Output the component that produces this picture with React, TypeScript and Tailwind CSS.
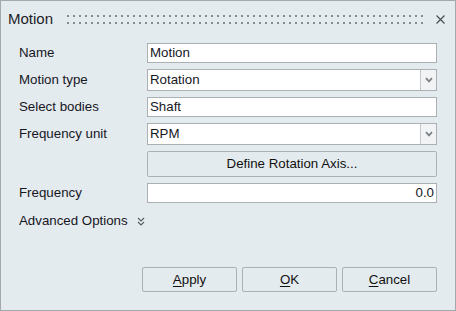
import React from "react";

const Chevron = () => (
  <svg width="8" height="6" viewBox="0 0 8 6" className="text-[#7d8287]">
    <path d="M1 1.2 L4 4.4 L7 1.2" fill="none" stroke="currentColor" strokeWidth="1.8" />
  </svg>
);

const Select = ({ value }: { value: string }) => (
  <div className="flex h-[22px] border border-[#aab0b4] bg-white">
    <div className="flex flex-1 items-center pl-[2px]">{value}</div>
    <div className="flex w-[16px] items-center justify-center border-l border-[#c4c9cc] bg-[#f1f3f4]">
      <Chevron />
    </div>
  </div>
);

const Input = ({ value, right }: { value: string; right?: boolean }) => (
  <div
    className={`flex h-[20px] items-center border border-[#aab0b4] bg-white px-[2px] ${
      right ? "justify-end" : ""
    }`}
  >
    {value}
  </div>
);

const Row = ({ label, children }: { label: string; children: React.ReactNode }) => (
  <div className="grid grid-cols-[128px_1fr] items-center">
    <div>{label}</div>
    {children}
  </div>
);

const DialogButton = ({ mn, rest }: { mn: string; rest: string }) => (
  <button className="flex h-[25px] w-[95px] items-center justify-center rounded-[2px] border border-[#aab0b4] bg-[#e4ebee] text-[#111]">
    <span className="underline underline-offset-2">{mn}</span>
    {rest}
  </button>
);

export default function App() {
  return (
    <div
      className="flex h-[311px] w-[456px] flex-col border border-[#a3a8ac] bg-[#e4ebee] text-[13.3px] text-[#16161f]"
      style={{ fontFamily: '"Liberation Sans", Arial, sans-serif' }}
    >
      <div className="flex h-[36px] items-center pl-[7px] pr-[10px]">
        <span className="text-[15px] text-[#1c1c28]">Motion</span>
        <svg className="ml-[14px] h-[9px] flex-1" preserveAspectRatio="none">
          <defs>
            <pattern id="grip" width="6" height="7" patternUnits="userSpaceOnUse">
              <rect x="0" y="0" width="2" height="2" fill="#868b90" />
            </pattern>
          </defs>
          <rect x="0" y="0" width="358" height="9" fill="url(#grip)" />
        </svg>
        <svg width="9" height="9" viewBox="0 0 9 9" className="ml-[12px]">
          <path d="M0.5 0.5 L8.5 8.5 M8.5 0.5 L0.5 8.5" stroke="#4a4f54" strokeWidth="1.2" />
        </svg>
      </div>

      <div className="mt-[6px] flex flex-col gap-[6px] pl-[18px] pr-[18px]">
        <Row label="Name">
          <Input value="Motion" />
        </Row>
        <Row label="Motion type">
          <Select value="Rotation" />
        </Row>
        <Row label="Select bodies">
          <Input value="Shaft" />
        </Row>
        <Row label="Frequency unit">
          <Select value="RPM" />
        </Row>
        <Row label="">
          <button className="h-[26px] rounded-[2px] border border-[#aab0b4] bg-[#e4ebee] text-[#111]">
            Define Rotation Axis...
          </button>
        </Row>
        <Row label="Frequency">
          <Input value="0.0" right />
        </Row>
        <div className="flex h-[24px] items-center gap-[9px]">
          <span>Advanced Options</span>
          <svg width="8" height="9" viewBox="0 0 8 9">
            <path
              d="M1 1 L4 4 L7 1 M1 5 L4 8 L7 5"
              fill="none"
              stroke="#5a5f64"
              strokeWidth="1.2"
            />
          </svg>
        </div>
      </div>

      <div className="mt-auto mb-[18px] flex justify-end gap-[5px] pr-[18px]">
        <DialogButton mn="A" rest="pply" />
        <DialogButton mn="O" rest="K" />
        <DialogButton mn="C" rest="ancel" />
      </div>
    </div>
  );
}
